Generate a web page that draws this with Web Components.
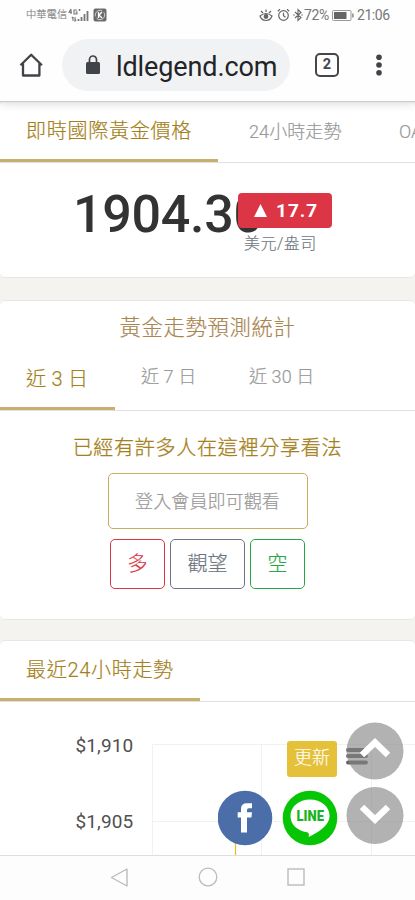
<!DOCTYPE html>
<html lang="zh-Hant"><head><meta charset="utf-8"><title>黃金價格</title>
<style>
html,body{margin:0;height:900px;overflow:hidden;background:#f4f3ef}
body{font-family:Roboto,"Noto Sans CJK TC",sans-serif;font-weight:400}
</style></head><body>
<phone-screen></phone-screen>
<script>
const define=(name,html)=>customElements.define(name,class extends HTMLElement{
  constructor(){super();const t=document.createElement('template');t.innerHTML=html;
    this.attachShadow({mode:'open'}).append(t.content.cloneNode(true));}
});
define('status-bar',`<style>
:host{display:flex;align-items:center;height:30px;box-sizing:border-box;padding:0 25px 0 26px;color:#777;font-size:14px;line-height:30px}
.carrier{font-size:10.3px;width:42px;white-space:nowrap;color:#777;font-weight:300;-webkit-text-stroke:.15px}
.end{margin-left:auto;display:flex;align-items:center}svg{display:block;flex:none}
.pct{width:24px;margin-left:1px;letter-spacing:-.35px}.time{margin-left:3px;width:33px;letter-spacing:-.45px}
</style><span class="carrier">中華電信</span>
<svg width="22" height="14" viewBox="0 0 22 14" fill="none" stroke="#777" stroke-width="1.1"><path d="M3 1 1 4.300h3M3 1v5M9 2H6v4h3V4H7.500M10.500 2h2M11.500 1v2"/><path d="M5 13V9M3.800 10.200 5 9M7 9v4l1.300-1.200"/><path d="M10.500 13v-2M13.500 13v-4M16.500 13V6M19.500 13V3" stroke-width="1.800"/></svg>
<svg style="margin-left:3px" width="14" height="14" viewBox="0 0 14 14"><rect x=".5" y=".5" width="13" height="13" rx="2" fill="#6a6a6a"/><circle cx="7" cy="7" r="4.700" fill="none" stroke="#ddd" stroke-width=".9" stroke-dasharray="11 2"/><path d="M5.500 4v6M9 4 6 7l3 3" stroke="#fff" stroke-width="1.300" fill="none"/></svg>
<div class="end">
<svg width="14" height="14" viewBox="0 0 14 14" fill="none" stroke="#666" stroke-width="1.200"><path d="M1 8q6-5 12 0-1.500 4.500-6 4.500T1 8zM2 3l2 2M7 1.500V4M12 3l-2 2"/><circle cx="7" cy="8.500" r="1.800" fill="#666"/></svg>
<svg style="margin-left:4px" width="13" height="14" viewBox="0 0 13 14" fill="none" stroke="#666" stroke-width="1.200"><circle cx="6.500" cy="7.500" r="4.800"/><path d="M.8 3.200 3 1.200M10 1.200l2.200 2M6.500 4.700v3l2 1.500"/></svg>
<svg style="margin-left:3px" width="10" height="14" viewBox="0 0 10 14" fill="none" stroke="#666" stroke-width="1.100"><path d="m2 4 6 5.500L5 12.500v-11l3 3L2 10M.2 7h1.500M8.300 7h1.500"/></svg>
<span class="pct">72%</span>
<svg style="margin-left:4px" width="22" height="11" viewBox="0 0 22 11"><rect x=".5" y=".5" width="18.500" height="10" rx="1" fill="none" stroke="#999"/><path d="M2 2h12.500v7H2z" fill="#666"/><path d="M20.900 3.500v4" stroke="#777" stroke-width="1.300"/></svg>
<span class="time">21:06</span></div>`);
define('browser-bar',`<style>
:host{display:flex;align-items:center;height:71px;box-sizing:border-box;padding:0 0 1px 18px;background:#fff}
svg{display:block;flex:none}
.url{margin-left:18px;width:228px;height:52px;box-sizing:border-box;border-radius:26px;background:#f1f2f4;display:flex;align-items:center;padding-left:22px;color:#222427;font-size:27px;white-space:nowrap}
.url span{margin:3px 0 0 14px;letter-spacing:-.1px}
.tabs{margin-left:25px;width:24px;height:24px;box-sizing:border-box;border:2.500px solid #43464a;border-radius:5px;font-size:14.500px;line-height:20px;text-align:center;font-weight:700;color:#43464a}
</style>
<svg width="26" height="26" viewBox="0 0 26 26" fill="none" stroke="#404347" stroke-width="2.300"><path d="M2.500 13.300 13.200 2.700l10.700 10.600M5 11.500v12h16.400v-12" stroke-linejoin="round"/></svg>
<div class="url"><svg width="18" height="22" viewBox="0 0 18 22"><rect x="2" y="8" width="14" height="12" rx="1.500" fill="#404347"/><path d="M5.500 8V5.500a3.500 3.500 0 0 1 7 0V8" fill="none" stroke="#404347" stroke-width="1.700"/></svg><span>ldlegend.com</span></div>
<div class="tabs">2</div>
<svg style="margin-left:35.500px" width="8" height="24" fill="#404347"><circle cx="4" cy="4.300" r="2.800"/><circle cx="4" cy="12" r="2.800"/><circle cx="4" cy="19.700" r="2.800"/></svg>`);
define('content-card',`<style>
:host{display:block;box-sizing:border-box;background:#fff;border:solid #e6e6e5;border-width:1px 0;border-radius:5px;overflow:hidden}
</style><slot></slot>`);
define('tab-strip',`<style>
:host{display:flex;box-sizing:border-box;border-bottom:1px solid #dfe0e1;overflow:hidden}
</style><slot></slot>`);
define('tab-item',`<style>
:host{display:block;flex:none;box-sizing:border-box;white-space:nowrap;color:#999;font-size:18px;font-weight:300;-webkit-text-stroke:.2px}
:host([active]){color:#a47f1c;font-size:20px;border-bottom:3px solid #c8b06c}
</style><slot></slot>`);
define('outline-button',`<style>
:host{display:flex;align-items:center;justify-content:center;box-sizing:border-box;border:1.500px solid currentColor;border-radius:5px;font-weight:300;padding-bottom:3px;-webkit-text-stroke:.2px}
</style><slot></slot>`);
define('price-panel',`<style>
:host{display:flex;height:114px;position:relative;color:#333}
.price{margin:24px 0 0 73px;font-size:52px;line-height:56px;font-weight:500;letter-spacing:-.3px;white-space:nowrap}
.side{position:absolute;left:238px;top:30px;width:94px}
.badge{height:35px;border-radius:4px;background:#dc3546;color:#fff;display:flex;align-items:center;font-weight:700;font-size:19px;letter-spacing:1px;padding-left:16px;box-sizing:border-box}
.badge svg{margin-right:9px}.unit{font-size:16px;line-height:26px;margin:3px 0 0 6px;color:#6c757d;font-weight:300;letter-spacing:.5px;-webkit-text-stroke:.15px}
</style><div class="price">1904.30</div><div class="side"><div class="badge"><svg width="13" height="13"><path d="M6.500 0 13 13H0z" fill="#fff"/></svg>17.7</div><div class="unit">美元/盎司</div></div>`);
define('vote-panel',`<style>
:host{display:flex;flex-direction:column;align-items:center;color:#a47f1c}
h3{margin:19px 0 0;font-weight:300;-webkit-text-stroke:.3px;font-size:20px;line-height:36px;letter-spacing:.75px}
.login{width:200px;height:56px;margin-top:7px;color:#c7ae60;font-size:18px}.login span{color:#999;letter-spacing:.1px}
.row{display:flex;gap:5px;margin-top:10px;font-size:20px}.row outline-button{height:50px;width:55px}
</style><h3>已經有許多人在這裡分享看法</h3><outline-button class="login"><span>登入會員即可觀看</span></outline-button>
<div class="row"><outline-button style="color:#dc3546">多</outline-button><outline-button style="color:#6c757d;width:75px">觀望</outline-button><outline-button style="color:#28a745">空</outline-button></div>`);
define('chart-panel',`<style>
:host{display:block;position:relative;height:153px;color:#505050}
.labels{padding:29px 0 0 75.500px;font-size:19px;line-height:30px;display:grid;gap:46px;letter-spacing:.1px}
svg.grid{position:absolute;left:0;top:0}
</style><div class="labels"><span>$1,910</span><span>$1,905</span></div>
<svg class="grid" width="415" height="153" fill="none"><path d="M152.500 153V42.500H415M152.500 119.500H415M261.500 42v111M371.500 42v111" stroke="#f1f1f0"/><path d="M235.500 139v14" stroke="#e8bd30" stroke-width="1.300"/></svg>`);
define('floating-tools',`<style>
:host{position:absolute;left:218px;top:722px;width:187px;height:124px;display:block}
.refresh{position:absolute;left:69px;top:19px;width:50px;height:36px;border-radius:3px;background:#e5c139;color:#fff;font-size:18px;line-height:33px;text-align:center;font-weight:300;-webkit-text-stroke:.15px}
svg{position:absolute;left:0;top:0}
text{font-family:Roboto,sans-serif;font-weight:900}
</style><svg width="187" height="124" viewBox="0 0 187 124">
<path d="M130 28h18M130 34h18M130 40.500h18" stroke="#606060" stroke-width="3.800" stroke-linecap="round"/>
<circle cx="157" cy="29" r="28.500" fill="#868686" fill-opacity=".64"/><circle cx="157" cy="93.500" r="28.500" fill="#868686" fill-opacity=".64"/>
<path d="m144 33 13-12.500L170 33M144 85l13 12.500L170 85" fill="none" stroke="#fff" stroke-width="6.500"/>
<circle cx="27" cy="96" r="27.300" fill="#4b6ea9"/><path d="M23 110.500V95.500h-3.300v-5.200H23v-3.500q0-5.500 6-5.500h5v5h-3.200q-1.800 0-1.800 1.800v2.200h5l-.6 5.200H29v15z" fill="#fff"/>
<circle cx="92" cy="96" r="27.300" fill="#05c505"/><path d="M92 77.500c-11 0-19.500 7-19.500 16.500 0 8.500 6.500 14.500 16.500 16.300 2 .4 2.200 1.500 1.600 4.700 9-4.500 21-11.500 21-21 0-9.500-8.600-16.500-19.600-16.500z" fill="#fff"/>
<text x="92.300" y="99.200" text-anchor="middle" font-size="14.500" textLength="27.500" lengthAdjust="spacingAndGlyphs" fill="#18b51e">LINE</text></svg><div class="refresh">更新</div>`);
define('system-nav',`<style>
:host{display:flex;align-items:center;justify-content:center;gap:68px;height:45px;border-top:1px solid #dedede;box-sizing:border-box;background:#fdfdfd;padding:0 0 2px 0}
svg{display:block}
</style><svg width="20" height="20"><path d="M17 2v17L1.500 10.500z" fill="none" stroke="#bbb" stroke-width="1.400" stroke-linejoin="round"/></svg>
<svg width="20" height="20"><circle cx="10" cy="10" r="8.800" fill="none" stroke="#bbb" stroke-width="1.300"/></svg>
<svg width="20" height="20"><rect x="2" y="2" width="16" height="16" fill="none" stroke="#bbb" stroke-width="1.400"/></svg>`);
define('phone-screen',`<style>
:host{display:flex;flex-direction:column;position:relative;width:415px;height:900px;background:#f4f3ef;overflow:hidden}
status-bar,browser-bar{background:#fefefe;flex:none}
status-bar{z-index:2}
browser-bar{z-index:1;box-shadow:0 1px 1px #ccc,0 3px 9px #ddd}
.one{height:177px;margin-top:0}.two{height:320px;margin-top:22px}.three{height:215px;margin-top:20px;border-bottom:0;border-radius:5px 5px 0 0}
.title{text-align:center;color:#a98550;font-size:21.300px;line-height:36px;margin-top:9px;font-weight:300;letter-spacing:.7px;-webkit-text-stroke:.2px}
system-nav{flex:none}
</style><status-bar></status-bar><browser-bar></browser-bar>
<content-card class="one"><tab-strip style="height:61px">
<tab-item active style="width:218px;padding:11px 0 0 26px;letter-spacing:.75px;line-height:36px">即時國際黃金價格</tab-item><tab-item style="width:150px;padding:12px 0 0 31px;line-height:36px;letter-spacing:.1px">24小時走勢</tab-item><tab-item style="padding:12px 0 0 31px;line-height:36px">OA</tab-item></tab-strip><price-panel></price-panel></content-card>
<content-card class="two"><div class="title">黃金走勢預測統計</div><tab-strip style="height:65px">
<tab-item active style="width:115px;padding:15px 0 0 26px;line-height:36px;letter-spacing:.3px">近 3 日</tab-item><tab-item style="width:103px;padding:13px 0 0 26px;line-height:36px;letter-spacing:.1px">近 7 日</tab-item><tab-item style="padding:13px 0 0 31px;line-height:36px;letter-spacing:.1px">近 30 日</tab-item></tab-strip><vote-panel></vote-panel></content-card>
<content-card class="three"><tab-strip style="height:61px"><tab-item active style="width:200px;padding:11px 0 0 26px;line-height:36px;letter-spacing:.7px">最近24小時走勢</tab-item></tab-strip><chart-panel></chart-panel></content-card>
<system-nav></system-nav><floating-tools></floating-tools>`);
</script></body></html>
